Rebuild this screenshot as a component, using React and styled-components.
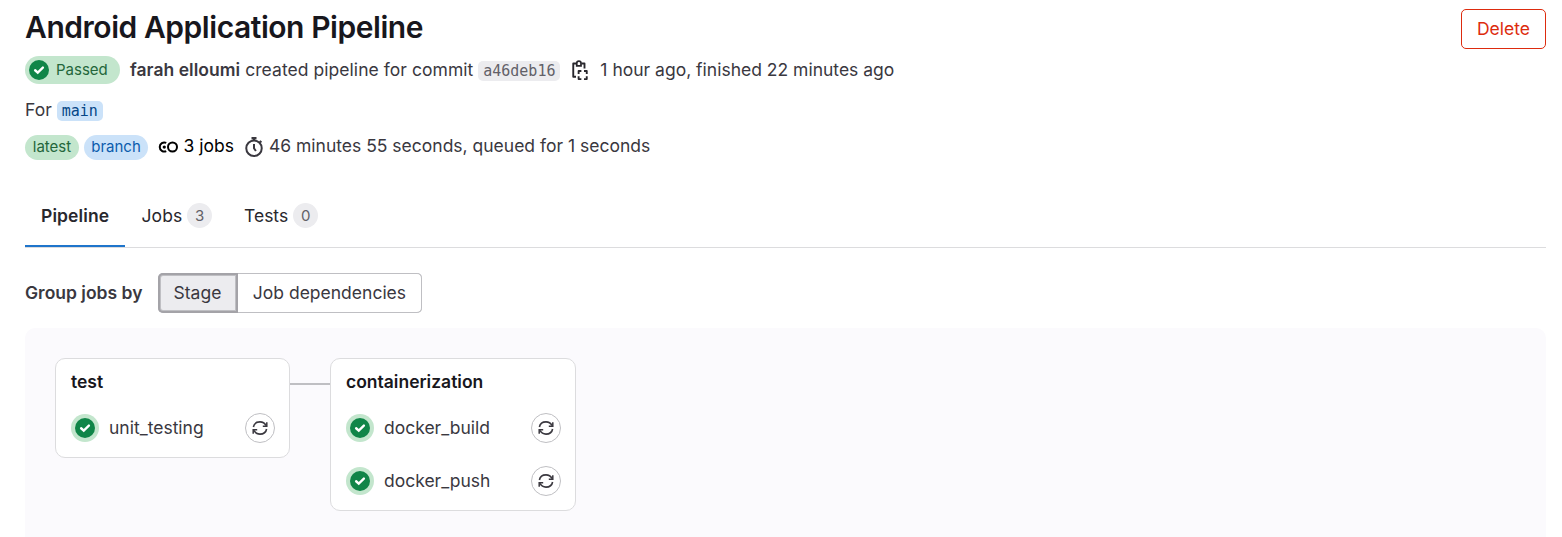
import React from "react";
import styled, { createGlobalStyle } from "styled-components";

const GlobalStyle = createGlobalStyle`
  *, *::before, *::after { box-sizing: border-box; }
  html, body { margin: 0; padding: 0; background: #fff; }
  body {
    font-family: Inter, "Liberation Sans", sans-serif;
    font-size: 17.5px;
    line-height: 25px;
    color: #3a383f;
    overflow: hidden;
  }
  h1, h2, p { margin: 0; }
  button { font: inherit; letter-spacing: inherit; cursor: pointer; }
`;

const Page = styled.main`
  height: 537px;
  padding: 0 16px 0 25px;
  display: flex;
  flex-direction: column;
  overflow: hidden;
`;
const Header = styled.header`
  display: flex;
  justify-content: space-between;
  align-items: flex-start;
  flex: none;
  height: 192px;
`;
const Title = styled.h1`
  margin-top: 9px;
  font-size: 30px;
  line-height: 37px;
  font-weight: 600;
  letter-spacing: -0.45px;
  color: #18171d;
`;
const Line = styled.div`
  display: flex;
  align-items: center;
  white-space: nowrap;
  height: ${(p) => p.$h}px;
  margin-top: ${(p) => p.$mt || 0}px;
`;
const Text = styled.span`
  white-space: pre;
  padding-bottom: ${(p) => p.$lift ?? 2}px;
  font-weight: ${(p) => (p.$bold ? 600 : 400)};
  letter-spacing: ${(p) => p.$track || 0}px;
  color: ${(p) => p.$color || "inherit"};
  margin-left: ${(p) => p.$ml || 0}px;
`;
const StatusBadge = styled.span`
  display: inline-flex;
  align-items: center;
  width: 95px;
  height: 28px;
  padding-left: 4px;
  border-radius: 14px;
  background: #c3e6cd;
  color: #24663b;
  font-size: 15px;
`;
const Pill = styled.span`
  display: inline-flex;
  align-items: center;
  justify-content: center;
  width: ${(p) => p.$w}px;
  height: 25px;
  padding-bottom: ${(p) => p.$lift ?? 1}px;
  border-radius: 13px;
  font-size: 15px;
  margin-right: ${(p) => p.$mr || 0}px;
  background: ${(p) => p.$bg};
  color: ${(p) => p.$color};
`;
const Code = styled.code`
  display: inline-flex;
  align-items: center;
  justify-content: center;
  width: ${(p) => p.$w}px;
  height: 20px;
  margin-left: 5px;
  margin-top: 1px;
  padding-top: 1px;
  border-radius: 5px;
  font-family: "DejaVu Sans Mono", "Liberation Mono", monospace;
  font-size: 15px;
  background: ${(p) => p.$bg};
  color: ${(p) => p.$color};
`;
const DeleteButton = styled.button`
  width: 85px;
  height: 40px;
  margin-top: 9px;
  padding: 0 0 2px;
  border: 1px solid #dd2b0e;
  border-radius: 5px;
  background: #fff;
  color: #dd2b0e;
`;
const Tabs = styled.nav`
  display: flex;
  height: 56px;
  flex: none;
  border-bottom: 1px solid #dcdcde;
`;
const Tab = styled.a`
  display: flex;
  align-items: center;
  width: ${(p) => p.$w}px;
  height: 55px;
  padding: 0 16px 8px;
  gap: 5px;
  color: #28272d;
  box-shadow: ${(p) => (p.$active ? "inset 0 -2px 0 #1f75cb" : "none")};
`;
const GroupRow = styled.div`
  display: flex;
  align-items: center;
  flex: none;
  height: 40px;
  margin-top: 25px;
`;
const Segments = styled.div`
  display: flex;
  margin-left: 16px;
`;
const Segment = styled.button`
  width: ${(p) => p.$w}px;
  height: 40px;
  padding: 0 2px 1px 0;
  color: #3a383f;
  border: 0;
  border-radius: ${(p) => (p.$active ? "5px 0 0 5px" : "0 5px 5px 0")};
  background: ${(p) => (p.$active ? "#ececef" : "#fff")};
  box-shadow: ${(p) =>
    p.$active
      ? "inset 0 0 0 2px #a4a3a8, inset 0 0 0 3px #bfbfc3"
      : "inset 0 1px 0 #bfbfc3, inset 0 -1px 0 #bfbfc3, inset -1px 0 0 #bfbfc3"};
`;
const Graph = styled.section`
  display: flex;
  align-items: flex-start;
  flex: 1;
  margin-top: 15px;
  padding: 30px;
  border-radius: 10px 10px 0 0;
  background: #fbfafd;
`;
const Stage = styled.article`
  width: ${(p) => p.$w}px;
  padding: 10px 14px 14px 15px;
  border: 1px solid #dcdcde;
  border-radius: 10px;
  background: #fff;
`;
const StageName = styled.h2`
  font-size: 17.5px;
  line-height: 25px;
  font-weight: 600;
  color: #18171d;
`;
const Connector = styled.div`
  width: 40px;
  height: 2px;
  margin-top: 25px;
  background: #bfbfc3;
`;
const Job = styled.div`
  display: flex;
  align-items: center;
  height: 30px;
  margin-top: ${(p) => (p.$first ? 19 : 23)}px;
`;
const StatusRing = styled.span`
  display: grid;
  place-items: center;
  width: 28px;
  height: 28px;
  border-radius: 50%;
  background: #c3e6cd;
`;
const RetryButton = styled.button`
  display: grid;
  place-items: center;
  width: 30px;
  height: 30px;
  margin-left: auto;
  padding: 0;
  border: 1px solid #bfbfc3;
  border-radius: 50%;
  background: #fff;
  color: #3a383f;
`;
const Icon = styled.svg`
  display: block;
  flex: none;
  margin-left: ${(p) => p.$ml || 0}px;
  margin-bottom: ${(p) => p.$mb || 0}px;
`;

const Check = () => (
  <Icon width="20" height="20" viewBox="0 0 16 16">
    <circle cx="8" cy="8" r="8" fill="#108548" />
    <path d="M4.9 8.2 7 10.1l4.1-4" fill="none" stroke="#fff" strokeWidth="1.9" strokeLinecap="round" strokeLinejoin="miter" />
  </Icon>
);
const Retry = () => (
  <Icon width="18" height="18" viewBox="0 0 18 18" fill="none" stroke="currentColor" strokeWidth="1.6">
    <path d="M2.4 8C3 4.9 5.7 2.9 9 2.9c2.5 0 4.8 1.4 6 3.7M15.6 10c-.6 3.1-3.3 5.1-6.6 5.1-2.5 0-4.8-1.4-6-3.7" />
    <path d="M15.8 3.2v4h-4M2.2 14.8v-4h4" strokeWidth="1.5" />
  </Icon>
);
const Copy = () => (
  <Icon $ml={10} width="20" height="20" viewBox="0 0 16 16" fill="none" stroke="#28272d" strokeWidth="1.5">
    <path d="M5 2.75H2.6v10.6h2.2M9.2 2.75h2.4v4" strokeLinejoin="round" />
    <path d="M5.4 4.6V2.5a1.7 1.7 0 0 1 3.4 0v2.1z" strokeWidth="1.4" />
    <path d="M6.9 11.1V8.75h2.2M11.2 8.75h2.2v2.35M6.9 12.9v2.35h2.2M13.4 12.9v2.35h-2.2" strokeLinejoin="round" />
  </Icon>
);
const Jobs = () => (
  <Icon $ml={9.5} $mb={2} width="20" height="20" viewBox="0 0 16 16" fill="none" stroke="#000" strokeWidth="1.6">
    <path d="M6.6 4.7A3.65 3.65 0 1 0 6.6 11.3" />
    <circle cx="11.6" cy="8" r="3.6" />
    <circle cx="5" cy="8" r="1.3" fill="#000" stroke="none" />
  </Icon>
);
const Timer = () => (
  <Icon $ml={10} $mb={2} width="20" height="20" viewBox="0 0 16 16" fill="none" stroke="#3a383f" strokeWidth="1.6">
    <circle cx="8" cy="9" r="6.2" />
    <path d="M8 5.5V9l1.5 2.2M8 1v2M12.6 3.1l1.3 1.3" />
    <path d="M6 1h4" strokeWidth="2" />
  </Icon>
);

const stages = [
  { name: "test", width: 235, jobs: ["unit_testing"] },
  { name: "containerization", width: 246, jobs: ["docker_build", "docker_push"] },
];

export default function App() {
  return (
    <Page>
      <GlobalStyle />
      <Header>
        <div>
          <Title>Android Application Pipeline</Title>
          <Line $h={28} $mt={10}>
            <StatusBadge><Check /><Text $ml={7}>Passed</Text></StatusBadge>
            <Text $bold $ml={10} $track={0.04}>farah elloumi</Text>
            <Text $track={0.05}> created pipeline for commit</Text>
            <Code $w={82} $bg="#ececef" $color="#626168">a46deb16</Code>
            <Copy />
            <Text $ml={10}>1 hour ago, finished 22 minutes ago</Text>
          </Line>
          <Line $h={25} $mt={14}>
            <Text>For</Text>
            <Code $w={46} $bg="#cbe2f9" $color="#064787">main</Code>
          </Line>
          <Line $h={25} $mt={12}>
            <Pill $w={54} $mr={5} $lift={2} $bg="#c3e6cd" $color="#24663b">latest</Pill>
            <Pill $w={64} $lift={2} $bg="#cbe2f9" $color="#0b5cad">branch</Pill>
            <Jobs />
            <Text $ml={6} $lift={4} $color="#000">3 jobs</Text>
            <Timer />
            <Text $ml={5} $lift={4}>46 minutes 55 seconds, queued for 1 seconds</Text>
          </Line>
        </div>
        <DeleteButton>Delete</DeleteButton>
      </Header>
      <Tabs>
        <Tab $w={100} $active><Text $bold $track={0.1} $lift={1}>Pipeline</Text></Tab>
        <Tab $w={103}><Text $lift={1} $ml={0.5} $track={0.1}>Jobs</Text><Pill $w={25} $bg="#ececef" $color="#626168">3</Pill></Tab>
        <Tab><Text $lift={1}>Tests</Text><Pill $w={25} $bg="#ececef" $color="#626168">0</Pill></Tab>
      </Tabs>
      <GroupRow>
        <Text $bold $lift={1}>Group jobs by</Text>
        <Segments>
          <Segment $w={80} $active>Stage</Segment>
          <Segment $w={184}>Job dependencies</Segment>
        </Segments>
      </GroupRow>
      <Graph>
        {stages.map((s, i) => (
          <React.Fragment key={s.name}>
            {i > 0 && <Connector />}
            <Stage $w={s.width}>
              <StageName>{s.name}</StageName>
              {s.jobs.map((j, k) => (
                <Job key={j} $first={k === 0}>
                  <StatusRing><Check /></StatusRing>
                  <Text $ml={10}>{j}</Text>
                  <RetryButton><Retry /></RetryButton>
                </Job>
              ))}
            </Stage>
          </React.Fragment>
        ))}
      </Graph>
    </Page>
  );
}
